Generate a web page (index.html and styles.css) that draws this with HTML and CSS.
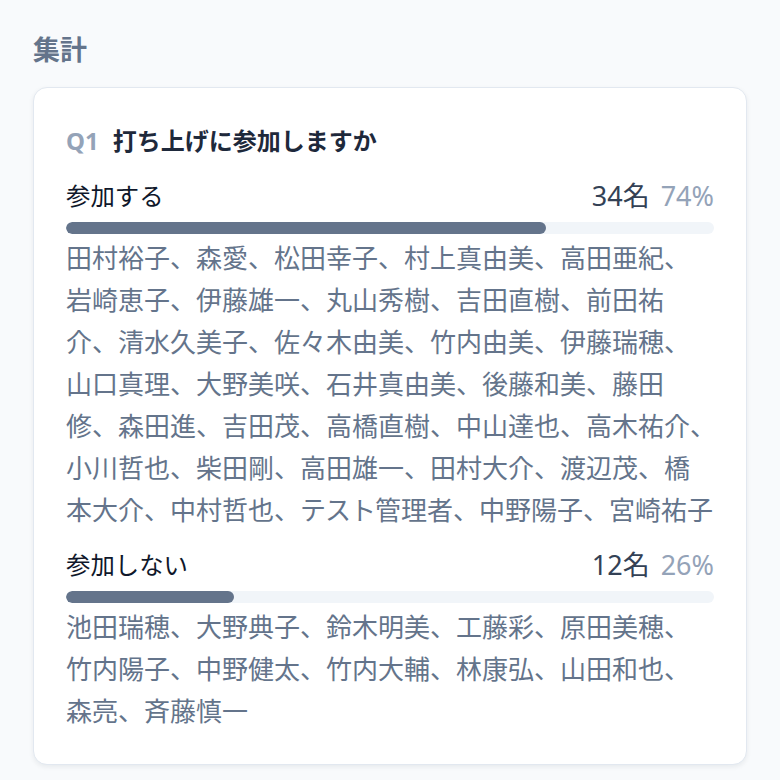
FILE: index.html
```html
<!DOCTYPE html>
<html lang="ja">
<head>
<meta charset="utf-8">
<link rel="stylesheet" href="styles.css">
</head>
<body>
<main class="page">
  <h2 class="section-title">集計</h2>
  <section class="card">
    <h3 class="question"><span class="qnum">Q1</span><span class="qtext">打ち上げに参加しますか</span></h3>
    <div class="option">
      <div class="option-head">
        <span class="option-label">参加する</span>
        <span class="option-stats"><span class="count">34名</span><span class="pct">74%</span></span>
      </div>
      <div class="bar"><div class="bar-fill" style="width:74%"></div></div>
      <p class="names">田村裕子、森愛、松田幸子、村上真由美、高田亜紀、岩崎恵子、伊藤雄一、丸山秀樹、吉田直樹、前田祐介、清水久美子、佐々木由美、竹内由美、伊藤瑞穂、山口真理、大野美咲、石井真由美、後藤和美、藤田修、森田進、吉田茂、高橋直樹、中山達也、高木祐介<span class="trim-end">、</span>小川哲也、柴田剛、高田雄一、田村大介、渡辺茂、橋本大介、中村哲也、<span class="kana">テスト</span>管理者、中野陽子、宮崎祐子</p>
    </div>
    <div class="option">
      <div class="option-head">
        <span class="option-label">参加しない</span>
        <span class="option-stats"><span class="count">12名</span><span class="pct">26%</span></span>
      </div>
      <div class="bar"><div class="bar-fill" style="width:26%"></div></div>
      <p class="names">池田瑞穂、大野典子、鈴木明美、工藤彩、原田美穂、竹内陽子、中野健太、竹内大輔、林康弘、山田和也、森亮、斉藤慎一</p>
    </div>
  </section>
</main>
</body>
</html>
```

FILE: styles.css
```css
* { box-sizing: border-box; }
html, body { margin: 0; padding: 0; background: #f8fafc; }
body {
  font-family: "Noto Sans", "Noto Sans CJK JP", sans-serif;
  color: #1e293b;
}
.page {
  padding: 30px 33px 16px;
}
.section-title {
  margin: 0 0 17px;
  font-size: 27px;
  line-height: 40px;
  font-weight: 700;
  color: #64748b;
}
.card {
  background: #ffffff;
  border: 1px solid #e2e8f0;
  border-radius: 14px;
  box-shadow: 0 2px 5px rgba(15, 23, 42, 0.07);
  padding: 32px 32px 32px;
  display: flex;
  flex-direction: column;
  gap: 16px;
}
.question {
  margin: 0;
  font-size: 24px;
  line-height: 42px;
  font-weight: 700;
  display: flex;
  gap: 14px;
  color: #1e293b;
}
.qnum { color: #94a3b8; }
.option { display: flex; flex-direction: column; }
.option-head {
  display: flex;
  justify-content: space-between;
  align-items: center;
  font-size: 24.4px;
  line-height: 36px;
}
.option-label { color: #0f172a; }
.option-stats {
  display: flex;
  gap: 11px;
  font-size: 27px;
}
.count { color: #334155; }
.pct { color: #94a3b8; }
.bar {
  margin-top: 8px;
  height: 12px;
  background: #f1f5f9;
  border-radius: 6px;
  overflow: hidden;
}
.bar-fill {
  height: 100%;
  background: #64748b;
  border-radius: 6px;
}
.names {
  margin: 3px 0 0;
  font-size: 26px;
  line-height: 42px;
  color: #64748b;
}
.kana { letter-spacing: -1px; }
.trim-end { letter-spacing: -13px; }
```
